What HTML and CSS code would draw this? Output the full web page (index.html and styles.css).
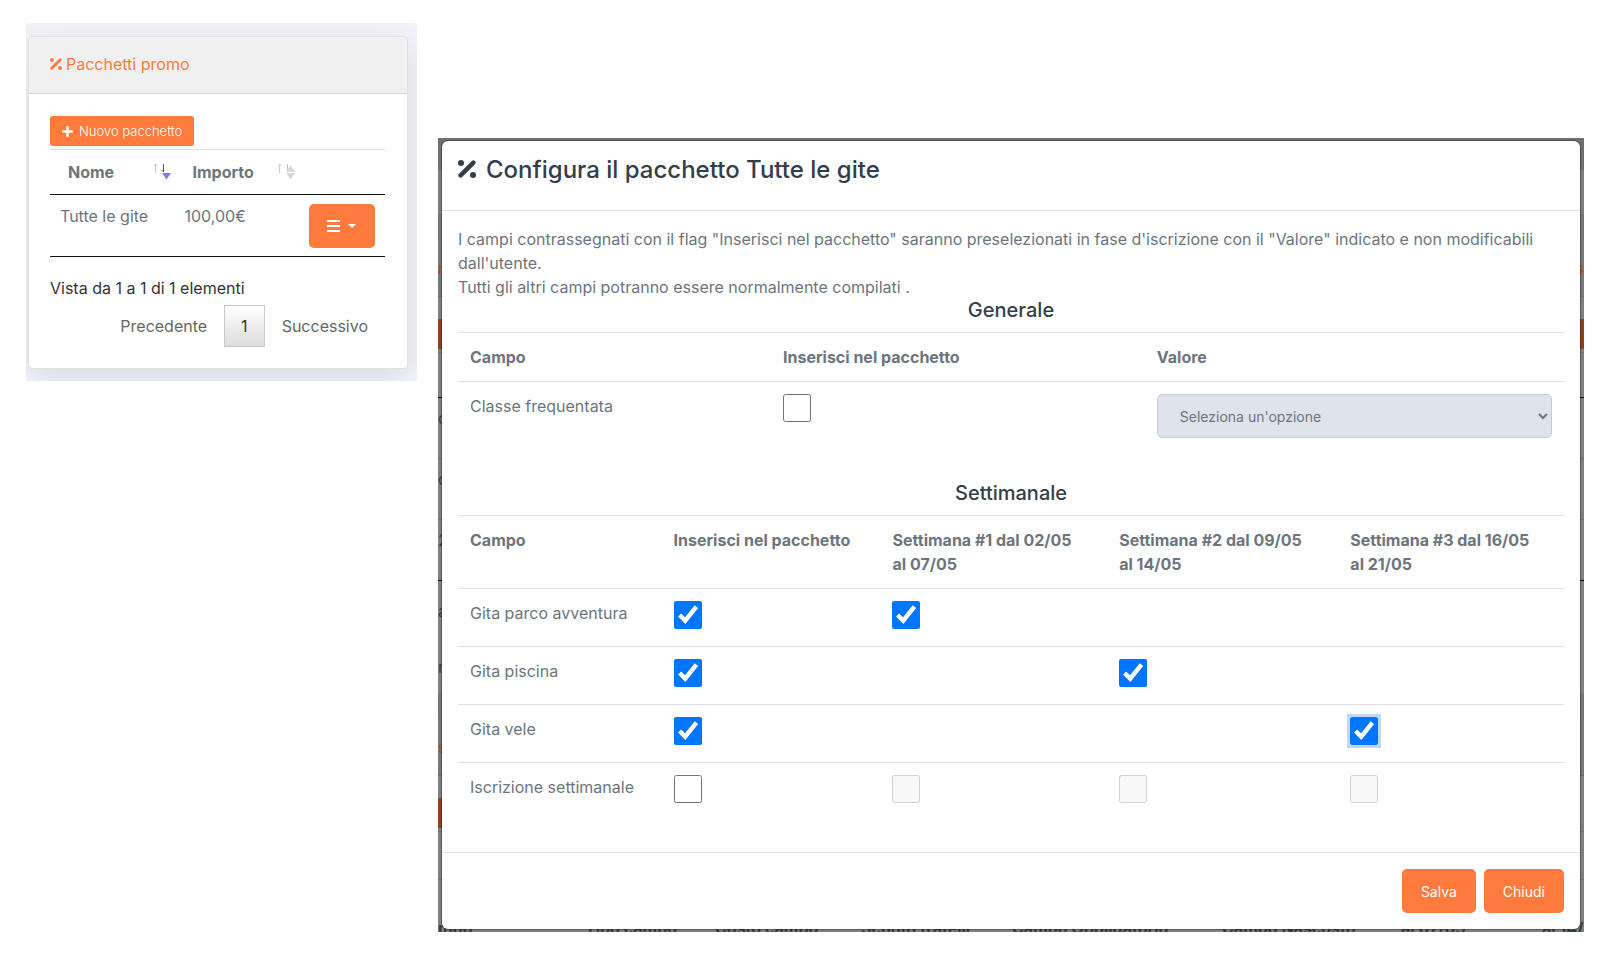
FILE: index.html
```html
<!DOCTYPE html>
<html lang="it">
<head>
    <meta charset="UTF-8">
    <meta name="viewport" content="width=device-width, initial-scale=1.0">
    <title>Pacchetti promo</title>
    <link rel="stylesheet" href="styles.css">
</head>
<body>
    <svg width="0" height="0" class="sprite">
        <symbol id="percent" viewBox="0 0 18 18">
            <circle cx="3" cy="3" r="3"/>
            <circle cx="15" cy="15" r="3"/>
            <path d="M2.6 15.4L15.4 2.6" stroke="currentColor" stroke-width="4.4" stroke-linecap="round"/>
        </symbol>
    </svg>
    <main class="page">
        <section class="side">
            <div class="card">
                <h2 class="card-header"><svg class="icon-title"><use href="#percent"/></svg>Pacchetti promo</h2>
                <div class="card-body">
                    <button class="btn btn-sm" type="button">
                        <svg width="11" height="11" viewBox="0 0 11 11"><path d="M5.5 1v9M1 5.5h9" stroke="#fff" stroke-width="2.4" stroke-linecap="round"/></svg>
                        Nuovo pacchetto
                    </button>
                    <table class="data-table">
                        <thead>
                            <tr>
                                <th><div class="sort">Nome
                                    <svg width="18" height="18" viewBox="0 0 18 18"><path d="M2.5 10V1M1 3l1.500-2L4 3" stroke="#ccc" fill="none"/><path d="M10.500 1v8M8.500 7l2 2" stroke="#555" fill="none"/><path d="M9 10h9l-4.500 6.500z" fill="#7b7fe0"/></svg>
                                </div></th>
                                <th><div class="sort">Importo
                                    <svg width="18" height="18" viewBox="0 0 18 18"><path d="M2.500 10V1M1 3l1.500-2L4 3" stroke="#ccc" fill="none"/><path d="M10.500 1v8" stroke="#bbb"/><path d="M9 9h9L13.500 2zM9 10h9l-4.500 6.500z" fill="#d8d8d8"/></svg>
                                </div></th>
                                <th></th>
                            </tr>
                        </thead>
                        <tbody>
                            <tr>
                                <td>Tutte le gite</td>
                                <td>100,00€</td>
                                <td>
                                    <button class="btn btn-menu" type="button" aria-label="Azioni">
                                        <svg width="13" height="12" viewBox="0 0 13 12"><path d="M0 1h13M0 6h13M0 11h13" stroke="#fff" stroke-width="2"/></svg>
                                        <svg width="8" height="4" viewBox="0 0 8 4"><path d="M0 0h8L4 4z" fill="#fff"/></svg>
                                    </button>
                                </td>
                            </tr>
                        </tbody>
                    </table>
                    <div class="info">Vista da 1 a 1 di 1 elementi</div>
                    <nav class="pagination">
                        <button type="button">Precedente</button>
                        <button type="button" class="current">1</button>
                        <button type="button">Successivo</button>
                    </nav>
                </div>
            </div>
        </section>

        <section class="stage">
            <!-- dimmed page behind the dialog -->
            <div class="under" aria-hidden="true">
                <div class="u-top"></div>
                <div class="u-sub"></div>
                <div class="u-gap"></div>
                <div class="u-head"><span>n</span><span>s</span></div>
                <div class="u-space"></div>
                <div class="u-bar"></div>
                <div class="u-line"></div>
                <div class="u-thead"></div>
                <div class="u-row"><span>o</span></div>
                <div class="u-row"><span>o</span></div>
                <div class="u-row u-last"><span>2</span></div>
                <div class="u-note"><span>a</span></div>
                <div class="u-note"><span>r</span></div>
                <div class="u-gap"></div>
                <div class="u-head"><span>s</span></div>
                <div class="u-space"></div>
                <div class="u-bar u-short"></div>
                <div class="u-line"></div>
                <div class="u-filter"></div>
                <div class="u-cols">
                    <b>mpo</b><b>Tipo campo</b><b>Costo campo</b><b>Sconto fratelli</b><b>Campo Obbligatorio</b><b>Campo Nascosto</b><b>al 07/05</b><b>al 14/</b>
                </div>
            </div>

            <div class="modal" role="dialog" aria-labelledby="modalTitle">
                <header class="modal-header">
                    <svg class="icon-modal"><use href="#percent"/></svg>
                    <h1 id="modalTitle">Configura il pacchetto Tutte le gite</h1>
                </header>
                <div class="modal-body">
                    <p>I campi contrassegnati con il flag "Inserisci nel pacchetto" saranno preselezionati in fase d'iscrizione con il "Valore" indicato e non modificabili dall'utente.<br>Tutti gli altri campi potranno essere normalmente compilati .</p>

                    <h3>Generale</h3>
                    <table class="table general">
                        <thead>
                            <tr><th>Campo</th><th>Inserisci nel pacchetto</th><th>Valore</th></tr>
                        </thead>
                        <tbody>
                            <tr>
                                <td><label for="classe">Classe frequentata</label></td>
                                <td><input type="checkbox" id="classe"></td>
                                <td>
                                    <select aria-label="Valore" disabled>
                                        <option>Seleziona un'opzione</option>
                                    </select>
                                </td>
                            </tr>
                        </tbody>
                    </table>

                    <h3>Settimanale</h3>
                    <table class="table weekly">
                        <thead>
                            <tr>
                                <th>Campo</th>
                                <th>Inserisci nel pacchetto</th>
                                <th>Settimana #1 dal 02/05<br>al 07/05</th>
                                <th>Settimana #2 dal 09/05<br>al 14/05</th>
                                <th>Settimana #3 dal 16/05<br>al 21/05</th>
                            </tr>
                        </thead>
                        <tbody>
                            <tr>
                                <td><label for="parco">Gita parco avventura</label></td>
                                <td><input type="checkbox" id="parco" checked></td>
                                <td><input type="checkbox" aria-label="Settimana 1" checked></td>
                                <td></td>
                                <td></td>
                            </tr>
                            <tr>
                                <td><label for="piscina">Gita piscina</label></td>
                                <td><input type="checkbox" id="piscina" checked></td>
                                <td></td>
                                <td><input type="checkbox" aria-label="Settimana 2" checked></td>
                                <td></td>
                            </tr>
                            <tr>
                                <td><label for="vele">Gita vele</label></td>
                                <td><input type="checkbox" id="vele" checked></td>
                                <td></td>
                                <td></td>
                                <td><input type="checkbox" class="focused" aria-label="Settimana 3" checked></td>
                            </tr>
                            <tr>
                                <td><label for="iscrizione">Iscrizione settimanale</label></td>
                                <td><input type="checkbox" id="iscrizione"></td>
                                <td><input type="checkbox" aria-label="Settimana 1" disabled></td>
                                <td><input type="checkbox" aria-label="Settimana 2" disabled></td>
                                <td><input type="checkbox" aria-label="Settimana 3" disabled></td>
                            </tr>
                        </tbody>
                    </table>
                </div>
                <footer class="modal-footer">
                    <button class="btn" type="button">Salva</button>
                    <button class="btn" type="button">Chiudi</button>
                </footer>
            </div>
        </section>
    </main>
</body>
</html>
```
FILE: styles.css
```css
* {
    box-sizing: border-box;
}
body {
    margin: 0;
    background: #fff;
    color: #6c757d;
    font-family: Inter, sans-serif;
    font-size: 16px;
    line-height: 24px;
}
h1, h2, h3, p {
    margin: 0;
}
button, select {
    font-family: inherit;
}
svg {
    fill: currentColor;
    flex-shrink: 0;
}
.sprite {
    position: absolute;
}
.page {
    display: grid;
    grid-template-columns: 391fr 1146fr;
    gap: 21px;
    align-items: start;
    padding: 23px 15px 24px 26px;
}

/* packages card */
.side {
    padding: 13px 9px 12px 2px;
    background: #f1f2fa;
    overflow: hidden;
}
.card {
    background: #fff;
    border: 1px solid #dfe1e3;
    border-radius: 5px;
    box-shadow: 0 8px 30px rgba(60, 60, 60, 0.12);
    overflow: hidden;
}
.card-header {
    display: flex;
    align-items: center;
    gap: 4px;
    padding: 15px 21px 17px;
    background: #f0f0f0;
    border-bottom: 1px solid #d5d7d9;
    color: #ff7a3d;
    font-size: 16px;
    font-weight: 400;
}
.icon-title {
    width: 12px;
    height: 12px;
}
.card-body {
    padding: 22px 22px 21px 21px;
}
.btn {
    height: 44px;
    padding: 0 19px;
    border: 0;
    border-radius: 5px;
    background: #ff7a3d;
    color: #fff;
    font-size: 14px;
    cursor: pointer;
}
.btn-sm {
    display: flex;
    align-items: center;
    gap: 6px;
    height: 30px;
    padding: 0 12px;
    border-radius: 3px;
    font-size: 13px;
    font-weight: 300;
}
.btn-menu {
    display: flex;
    align-items: center;
    gap: 8px;
    padding: 0 19px 0 18px;
}
.data-table {
    width: 100%;
    margin-top: 3px;
    border-collapse: separate;
    border-spacing: 0;
    border-top: 1px solid #dee2e6;
    border-bottom: 1px solid #111;
    table-layout: fixed;
}
.data-table th {
    height: 45px;
    padding: 0 4px 0 18px;
    border-bottom: 1px solid #111;
    text-align: left;
}
.data-table th:last-child {
    width: 86px;
}
.data-table td {
    padding: 9px 10px 8px;
    vertical-align: top;
}
.sort {
    display: flex;
    align-items: center;
    justify-content: space-between;
}
.info {
    margin-top: 19px;
    color: #333;
}
.pagination {
    display: flex;
    justify-content: flex-end;
    margin-top: 5px;
}
.pagination button {
    height: 42px;
    padding: 0 16px;
    border: 1px solid transparent;
    background: none;
    color: #666;
    font-size: 16px;
}
.pagination .current {
    border-color: #c8c8c8;
    background: linear-gradient(#fff, #dcdcdc);
    color: #333;
}

/* dialog */
.stage {
    position: relative;
    margin-top: 115px;
    padding: 3px 4px;
}
.modal {
    position: relative;
    background: #fff;
    border-radius: 6px;
    box-shadow: 0 0 0 1px rgba(0, 0, 0, 0.3);
}
.modal-header {
    display: flex;
    gap: 10px;
    padding: 17px 16px 28px;
    border-bottom: 1px solid #dee2ec;
    color: #343d4a;
}
.modal-header h1 {
    font-size: 24px;
    font-weight: 500;
}
.icon-modal {
    width: 18px;
    height: 18px;
    margin-top: 2px;
}
.modal-body {
    padding: 16px;
}
h3 {
    padding-bottom: 11px;
    color: #343d4a;
    font-size: 20px;
    font-weight: 500;
    line-height: 22px;
    text-align: center;
}
.table {
    width: 100%;
    border-collapse: separate;
    border-spacing: 0;
    table-layout: fixed;
}
.table th, .table td {
    padding: 12px;
    border-top: 1px solid #dee2ec;
    text-align: left;
    vertical-align: top;
}
.general {
    margin-bottom: 20px;
}
.general td {
    padding-bottom: 24px;
}
.weekly {
    margin-bottom: 16px;
}
.general th:nth-child(1) { width: 28.3%; }
.general th:nth-child(2) { width: 33.8%; }
.weekly th:nth-child(1) { width: 18.4%; }
.weekly th:nth-child(2) { width: 19.8%; }
.weekly th:nth-child(3) { width: 20.5%; }
.weekly th:nth-child(4) { width: 20.9%; }
.weekly td {
    height: 58px;
    padding-bottom: 0;
}
.table input {
    display: block;
    width: 28px;
    height: 28px;
    margin: 0;
}
.table .focused {
    outline: 0;
    box-shadow: 0 0 0 3px #bfd6ff;
}
.table select {
    display: block;
    width: 100%;
    height: 44px;
    padding: 0 0 0 18px;
    border: 1px solid #c3cad6;
    border-radius: 5px;
    background: #dfe3eb;
    color: #6c757d;
    font-size: 14px;
    opacity: 1;
}
.modal-footer {
    display: flex;
    justify-content: flex-end;
    gap: 8px;
    padding: 16px;
    border-top: 1px solid #dee2ec;
}

/* page under the dialog */
.under {
    position: absolute;
    inset: 0;
    overflow: hidden;
    background: #808080;
    color: #36393f;
}
.under > div {
    display: flex;
    justify-content: space-between;
}
.u-top {
    height: 32px;
    background: #6f6f6f;
}
.u-sub {
    height: 44px;
    background: #7d7d7d;
}
.u-gap {
    height: 26px;
    background: #74747a;
}
.u-head {
    height: 57px;
    padding-top: 16px;
    background: #787878;
    border-bottom: 1px solid #6a6b6c;
    color: #b04a1c;
}
.u-space {
    height: 22px;
}
.u-bar {
    height: 30px;
    background: #8a411f;
}
.u-short {
    width: 144px;
}
.u-line {
    height: 4px;
    border-bottom: 1px solid #6f7173;
}
.u-thead {
    height: 45px;
    border-bottom: 1px solid #090909;
}
.u-row {
    height: 61px;
    padding-top: 8px;
    border-bottom: 1px solid #6f7173;
}
.u-last {
    border-color: #090909;
}
.u-note {
    height: 56px;
    padding-top: 18px;
}
.u-filter {
    height: 48px;
    border-bottom: 1px solid #6f7173;
}
.under .u-cols {
    display: grid;
    grid-template-columns: 147fr 130fr 146fr 151fr 210fr 179fr 141fr 42fr;
    padding-top: 36px;
    white-space: nowrap;
}
```
